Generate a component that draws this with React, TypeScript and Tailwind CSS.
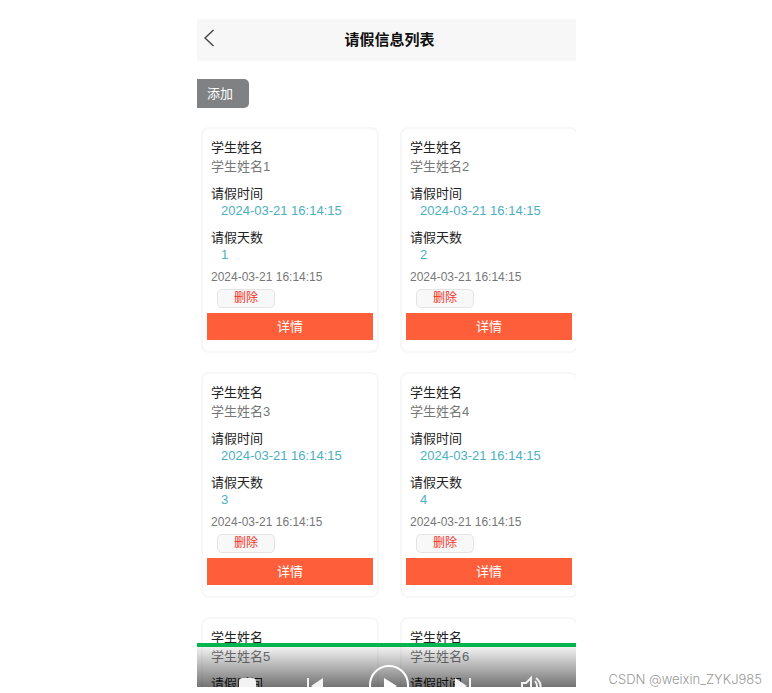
const TIME = '2024-03-21 16:14:15';
const RECORDS = [1, 2, 3, 4, 5, 6];

function LeaveCard({ id }: { id: number }) {
  return (
    <article className="flex flex-col rounded-lg border-2 border-[#f7f7f7] px-1 pt-2.5 pb-[11px] text-[13px]">
      <dl className="px-1">
        <dt className="leading-[18px] text-[#222]">学生姓名</dt>
        <dd className="mb-2 leading-5 text-[#777]">{'学生姓名' + id}</dd>
        <dt className="leading-[18px] text-[#222]">请假时间</dt>
        <dd className="mb-2.5 pl-2.5 leading-4 text-[#4bb0bf]">{TIME}</dd>
        <dt className="leading-[18px] text-[#222]">请假天数</dt>
        <dd className="mb-1.5 pl-2.5 leading-4 text-[#4bb0bf]">{id}</dd>
      </dl>
      <time className="px-1 text-xs leading-4 text-[#777]">{TIME}</time>
      <button className="mt-1 ml-2.5 h-[19px] w-[58px] rounded-[5px] border border-[#e4e4e4] bg-[#f8f8f8] text-xs leading-[17px] text-[#f03328]">
        删除
      </button>
      <button className="mt-[5px] h-[27px] bg-[#ff5e3a] text-[13px] leading-[27px] text-white">详情</button>
    </article>
  );
}

function PlayerControls() {
  return (
    <div className="absolute inset-x-0 bottom-0 h-11 overflow-hidden border-t-4 border-[#05b44f] bg-linear-to-b from-black/5 to-black/55">
      <svg className="block h-10 w-full" viewBox="0 0 379 40" preserveAspectRatio="xMidYMin slice" fill="none" aria-hidden="true">
        <rect x="42" y="31" width="17" height="17" rx="4" fill="#f2f2f2" />
        <path d="M111 31v16" stroke="#f2f2f2" strokeWidth="2" />
        <path d="M126 31v16l-12-8z" fill="#f2f2f2" />
        <circle cx="192" cy="38" r="19" stroke="#fff" strokeWidth="2" />
        <path d="M187 31v16l13-8z" fill="#fff" />
        <path d="M258 31v16l12-8z" fill="#f2f2f2" />
        <path d="M273 31v16" stroke="#f2f2f2" strokeWidth="2" />
        <path d="M325 46v-10h4l5-5v18M338 34q4 5 0 10M339 31q8 7 2 15" stroke="#f2f2f2" strokeWidth="2" />
      </svg>
    </div>
  );
}

export default function App() {
  return (
    <div className="relative flex h-screen flex-col bg-white pt-[19px] pb-1.5 pl-px font-['Liberation_Sans','Noto_Sans_CJK_SC',sans-serif]">
      <main className="relative mx-auto min-h-0 w-full max-w-[379px] flex-1 overflow-hidden">
        <header className="grid h-[42px] grid-cols-[40px_1fr_40px] items-center bg-[#f7f7f7]">
          <button aria-label="返回" className="pb-1 pl-1.5">
            <svg width="12" height="18" viewBox="0 0 12 18" fill="none" stroke="#444" strokeWidth="1.4" aria-hidden="true">
              <path d="M10.500 1 2 9l8.500 8" />
            </svg>
          </button>
          <h1 className="pl-1.5 text-center text-[15px] font-bold text-[#111]">请假信息列表</h1>
        </header>
        <button className="mt-[18px] block h-[29px] w-[52px] rounded-r-[5px] bg-[#808182] pr-1.5 text-[13px] text-white">
          添加
        </button>
        <section className="mt-[19px] grid grid-cols-[178px_178px] gap-x-[21px] gap-y-[19px] pl-1">
          {RECORDS.map((id) => (
            <LeaveCard key={id} id={id} />
          ))}
        </section>
        <PlayerControls />
      </main>
      <p className="absolute right-2.5 bottom-1 font-['Inter',sans-serif] text-[13px] leading-5 font-light text-[#999]">
        CSDN @weixin_ZYKJ985
      </p>
    </div>
  );
}
